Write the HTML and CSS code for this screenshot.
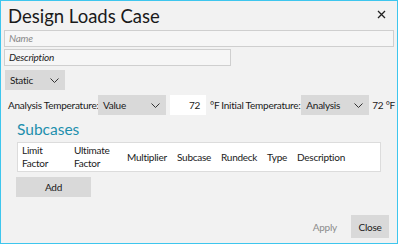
FILE: index.html
```html
<!DOCTYPE html>
<html>
<head>
    <title>Design Loads Case</title>
    <meta charset="UTF-8">
    <link rel="stylesheet" href="styles.css">
</head>
<body>
    <div class="dialog">
        <div class="title-bar">
            <h1>Design Loads Case</h1>
            <span class="close-x">
                <svg width="9" height="9" viewBox="0 0 9 9"><path d="M1 1L8 8M8 1L1 8" stroke="#222" stroke-width="1.3"/></svg>
            </span>
        </div>

        <div class="field name-field">Name</div>
        <div class="field desc-field">Description</div>

        <div class="combo static-combo">
            <span>Static</span>
            <svg class="chev" width="9" height="5" viewBox="0 0 9 5"><path d="M0.5 0.5L4.5 4.5L8.5 0.5" fill="none" stroke="#333" stroke-width="1"/></svg>
        </div>

        <div class="temp-row">
            <span class="label label-analysis">Analysis Temperature:</span>
            <div class="combo temp-combo">
                <span>Value</span>
                <svg class="chev" width="9" height="5" viewBox="0 0 9 5"><path d="M0.5 0.5L4.5 4.5L8.5 0.5" fill="none" stroke="#333" stroke-width="1"/></svg>
            </div>
            <div class="num-box">72</div>
            <span class="unit unit-f">°F</span>
            <span class="label label-initial">Initial Temperature:</span>
            <div class="combo temp-combo">
                <span>Analysis</span>
                <svg class="chev" width="9" height="5" viewBox="0 0 9 5"><path d="M0.5 0.5L4.5 4.5L8.5 0.5" fill="none" stroke="#333" stroke-width="1"/></svg>
            </div>
            <span class="unit unit-last">72 °F</span>
        </div>

        <section class="subcases">
            <h2>Subcases</h2>
            <div class="grid-head">
                <div class="col c-limit">Limit<br>Factor</div>
                <div class="col c-ult">Ultimate<br>Factor</div>
                <div class="col c-mult">Multiplier</div>
                <div class="col c-sub">Subcase</div>
                <div class="col c-run">Rundeck</div>
                <div class="col c-type">Type</div>
                <div class="col c-desc">Description</div>
            </div>
            <button class="btn add-btn">Add</button>
        </section>

        <div class="footer">
            <button class="btn apply-btn">Apply</button>
            <button class="btn close-btn">Close</button>
        </div>
    </div>
</body>
</html>
```

FILE: styles.css
```css
html, body {
    margin: 0;
    padding: 0;
    background: #f2f2f2;
}

body {
    font-family: Lato, "Noto Sans", sans-serif;
    font-size: 10px;
    letter-spacing: -0.25px;
    color: #1a1a1a;
    white-space: nowrap;
}

.dialog {
    box-sizing: border-box;
    width: 398px;
    height: 244px;
    border: 1px solid #3ec6ee;
    background: #f2f2f2;
    display: flex;
    flex-direction: column;
    padding: 0 3px;
}

.title-bar {
    display: flex;
    align-items: center;
    justify-content: space-between;
    height: 29px;
    padding: 0 8px 0 4px;
}

h1 {
    margin: 0;
    font-weight: normal;
    font-size: 18.5px;
    letter-spacing: 0;
    color: #1a1a1a;
}

.close-x {
    display: flex;
    margin-top: -2px;
}

.field {
    box-sizing: border-box;
    height: 17px;
    border: 1px solid #cfcfcf;
    background: #f6f6f6;
    font-style: italic;
    padding: 0 4px;
    line-height: 15px;
}

.name-field {
    color: #8a8a8a;
    margin-bottom: 2px;
}

.desc-field {
    width: 227px;
    margin-bottom: 4px;
}

.combo {
    box-sizing: border-box;
    flex-shrink: 0;
    height: 20px;
    background: #d9d9d9;
    display: flex;
    align-items: center;
    justify-content: space-between;
    padding: 0 6px 0 5px;
}

.static-combo {
    width: 60px;
    margin-left: 1px;
}

.temp-row {
    display: flex;
    align-items: center;
    margin-top: 5px;
    padding-left: 4px;
}

.label {
    flex-shrink: 0;
}

.label-analysis {
    width: 90px;
}

.label-initial {
    width: 80px;
    margin-left: 2px;
}

.temp-combo {
    width: 68px;
}

.num-box {
    box-sizing: border-box;
    flex-shrink: 0;
    width: 36px;
    height: 20px;
    background: #fff;
    margin-left: 4px;
    text-align: right;
    padding-right: 6px;
    line-height: 20px;
}

.unit-f {
    width: 10px;
    margin-left: 4px;
}

.unit-last {
    margin-left: 3px;
}

.subcases {
    padding-left: 13px;
    padding-right: 13px;
}

h2 {
    margin: 5px 0 4px 0;
    font-weight: normal;
    font-size: 15.5px;
    letter-spacing: 0;
    color: #1d8fad;
    line-height: 18px;
}

.grid-head {
    box-sizing: border-box;
    height: 30px;
    background: #fff;
    border: 1px solid #dcdcdc;
    display: flex;
    align-items: center;
    padding-left: 4px;
    line-height: 13px;
}

.c-limit { width: 52px; }
.c-ult { width: 53px; }
.c-mult { width: 50px; }
.c-sub { width: 44px; }
.c-run { width: 46px; }
.c-type { width: 30px; }

.btn {
    font-family: inherit;
    font-size: 10px;
    letter-spacing: -0.25px;
    border: none;
    background: #d9d9d9;
    color: #1a1a1a;
    padding: 0;
}

.add-btn {
    width: 75px;
    height: 20px;
    margin-top: 5px;
    margin-left: -1px;
}

.footer {
    margin-top: auto;
    display: flex;
    justify-content: flex-end;
    align-items: center;
    padding: 0 5px 5px 0;
}

.apply-btn {
    background: transparent;
    color: #8c8c8c;
    margin-right: 14px;
}

.close-btn {
    width: 38px;
    height: 23px;
}
```
